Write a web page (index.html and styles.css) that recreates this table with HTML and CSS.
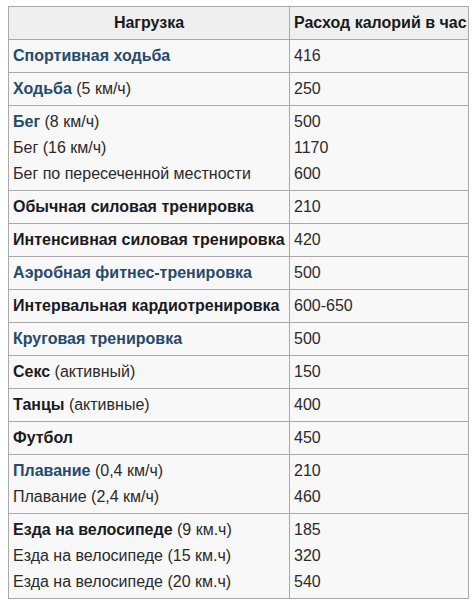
FILE: index.html
```html
<!DOCTYPE html>
<html lang="ru">
<head>
<meta charset="utf-8">
<title>Расход калорий</title>
<link rel="stylesheet" href="styles.css">
</head>
<body>
<table class="wikitable">
  <colgroup><col class="c1"><col class="c2"></colgroup>
  <thead>
    <tr><th>Нагрузка</th><th>Расход калорий в час</th></tr>
  </thead>
  <tbody>
    <tr><td><a class="lnk">Спортивная ходьба</a></td><td>416</td></tr>
    <tr><td><a class="lnk">Ходьба</a> (5 км/ч)</td><td>250</td></tr>
    <tr class="multi"><td><a class="lnk">Бег</a> (8 км/ч)<br>Бег (16 км/ч)<br>Бег по пересеченной местности</td><td>500<br>1170<br>600</td></tr>
    <tr><td><b>Обычная силовая тренировка</b></td><td>210</td></tr>
    <tr><td><b>Интенсивная силовая тренировка</b></td><td>420</td></tr>
    <tr><td><a class="lnk">Аэробная фитнес-тренировка</a></td><td>500</td></tr>
    <tr><td><b>Интервальная кардиотренировка</b></td><td>600-650</td></tr>
    <tr><td><a class="lnk">Круговая тренировка</a></td><td>500</td></tr>
    <tr><td><b>Секс</b> (активный)</td><td>150</td></tr>
    <tr><td><b>Танцы</b> (активные)</td><td>400</td></tr>
    <tr><td><b>Футбол</b></td><td>450</td></tr>
    <tr class="multi"><td><a class="lnk">Плавание</a> (0,4 км/ч)<br>Плавание (2,4 км/ч)</td><td>210<br>460</td></tr>
    <tr class="multi"><td><b>Езда на велосипеде</b> (9 км.ч)<br>Езда на велосипеде (15 км.ч)<br>Езда на велосипеде (20 км.ч)</td><td>185<br>320<br>540</td></tr>
  </tbody>
</table>
</body>
</html>
```
FILE: styles.css
```css
html, body {
  margin: 0;
  padding: 0;
  background: #ffffff;
}

body {
  font-family: "Liberation Sans", Arial, sans-serif;
  font-size: 16px;
  color: #2a2a2a;
}

.wikitable {
  margin: 6px 8px 0 8px;
  width: 460px;
  border-collapse: collapse;
  border: 1px solid #a9a9a9;
  background: #f8f8f8;
  table-layout: fixed;
}

.c1 { width: 281px; }
.c2 { width: 179px; }

.wikitable th,
.wikitable td {
  border: 1px solid #a9a9a9;
  padding: 3px 4px 3px 4px;
  line-height: 26px;
  text-align: left;
  vertical-align: top;
  white-space: nowrap;
}

.wikitable th {
  background: #efefef;
  font-weight: bold;
  color: #1a1a1a;
  text-align: center;
}

.wikitable th + th {
  text-align: left;
}

.wikitable b {
  color: #1a1a22;
}

.lnk {
  font-weight: bold;
  color: #264a6c;
  text-decoration: none;
}
```
